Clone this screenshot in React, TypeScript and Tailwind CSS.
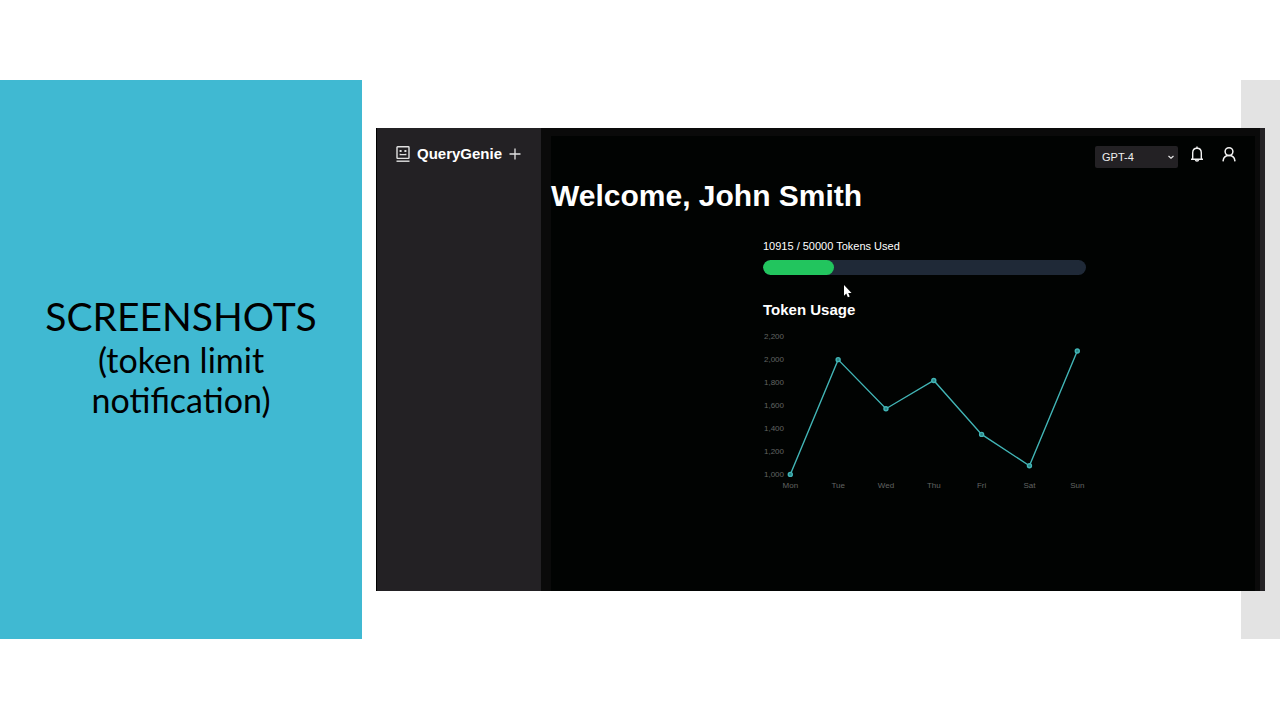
import React from "react";

const usage = [
  { day: "Mon", tokens: 1000 },
  { day: "Tue", tokens: 1998 },
  { day: "Wed", tokens: 1571 },
  { day: "Thu", tokens: 1817 },
  { day: "Fri", tokens: 1348 },
  { day: "Sat", tokens: 1075 },
  { day: "Sun", tokens: 2073 },
];
const ticks = [2200, 2000, 1800, 1600, 1400, 1200, 1000];

const toX = (i: number) => 27.3 + i * 47.83;
const toY = (v: number) => 144.4 - (v - 1000) * 0.115;

function UsageChart() {
  return (
    <svg viewBox="0 0 323 162" className="block w-full" role="img" aria-label="Token usage by day">
      <g fill="#626363" fontSize="8">
        {ticks.map((t) => (
          <text key={t} x="21" y={toY(t) + 3} textAnchor="end">
            {t.toLocaleString("en-US")}
          </text>
        ))}
        {usage.map((p, i) => (
          <text key={p.day} x={toX(i)} y="158" textAnchor="middle">
            {p.day}
          </text>
        ))}
      </g>
      <polyline
        points={usage.map((p, i) => `${toX(i)},${toY(p.tokens)}`).join(" ")}
        fill="none"
        stroke="#42b5b6"
        strokeWidth="1.4"
      />
      {usage.map((p, i) => (
        <circle key={p.day} cx={toX(i)} cy={toY(p.tokens)} r="2" fill="#2a8586" stroke="#42b5b6" strokeWidth="1.4" />
      ))}
    </svg>
  );
}

function RobotIcon() {
  return (
    <svg width="14" height="16" viewBox="0 0 14 16" fill="none" stroke="#e2e2e2" strokeWidth="1.4" aria-hidden="true">
      <rect x="1" y="0.8" width="12" height="11.6" rx="0.6" />
      <path d="M0.500 15.200H13.500" />
      <path d="M3.600 5H5.600M8.400 5H10.400" strokeWidth="1.900" />
      <path d="M4.200 7.700V8.700H9.800V7.700" strokeWidth="1.200" />
    </svg>
  );
}

function PlusIcon() {
  return (
    <svg width="12" height="12" viewBox="0 0 12 12" stroke="#e2e2e2" strokeWidth="1.3" aria-hidden="true">
      <path d="M6 0.500V11.500M0.500 6H11.500" />
    </svg>
  );
}

function BellIcon() {
  return (
    <svg width="14" height="16" viewBox="0 0 14 16" fill="none" stroke="#f2f2f2" strokeWidth="1.4" strokeLinejoin="round" aria-hidden="true">
      <path d="M1 13.200H13M2.700 13.200V6.700C2.700 3.900 4.500 2.200 7 2.200S11.300 3.900 11.300 6.700V13.200" />
      <path d="M7 0.600V2.200" />
      <path d="M5.300 13.400C5.500 14.600 6.200 15.100 7 15.100S8.500 14.600 8.700 13.400" />
    </svg>
  );
}

function PersonIcon() {
  return (
    <svg width="14" height="16" viewBox="0 0 14 16" fill="none" stroke="#f2f2f2" strokeWidth="1.5" strokeLinecap="round" aria-hidden="true">
      <circle cx="7" cy="5.600" r="3.900" />
      <path d="M1.100 14.800C1.500 11.400 4 9.600 7 9.600S12.500 11.400 12.900 14.800" />
    </svg>
  );
}

function Sidebar() {
  return (
    <aside className="w-[165px] shrink-0 border-l border-black bg-[#232124]">
      <div className="flex items-center gap-[7px] pt-4 pl-[19px]">
        <RobotIcon />
        <span className="text-[15px] leading-[19px] font-bold">QueryGenie</span>
        <button type="button" aria-label="New chat">
          <PlusIcon />
        </button>
      </div>
    </aside>
  );
}

function Header() {
  return (
    <header className="flex items-start justify-end pt-2.5 pr-[19px]">
      <div className="relative">
        <select
          aria-label="Model"
          defaultValue="GPT-4"
          className="block h-[22px] w-[83px] appearance-none rounded-xs bg-[#232124] pl-[7px] text-[11px] leading-4 text-[#f0f0f0]"
        >
          <option>GPT-4</option>
        </select>
        <svg
          className="pointer-events-none absolute top-2 right-1"
          width="6"
          height="6"
          viewBox="0 0 6 6"
          fill="none"
          stroke="#e8e8e8"
          strokeWidth="1.2"
          aria-hidden="true"
        >
          <path d="M0.500 2L3 4.300L5.500 2" />
        </svg>
      </div>
      <button type="button" aria-label="Notifications" className="ml-3">
        <BellIcon />
      </button>
      <button type="button" aria-label="Account" className="ml-[18px]">
        <PersonIcon />
      </button>
    </header>
  );
}

export default function App() {
  return (
    <div className="bg-white py-20 font-['Liberation_Sans',Arial,sans-serif]">
      <div className="grid grid-cols-[362px_minmax(0,1fr)_39px]">
        <section className="col-start-1 row-start-1 flex items-center justify-center bg-[#40b9d2] px-10 pb-2 text-center text-black">
          <h1 className="font-['Lato',sans-serif] text-[34px] leading-10">
            <span className="block text-[39px] leading-12">SCREENSHOTS</span>
            (token limit notification)
          </h1>
        </section>
        <div className="col-start-3 row-start-1 bg-[#e3e3e3]" />
        <div className="col-span-2 col-start-2 row-start-1 mt-12 mr-[15px] mb-12 ml-3.5 flex h-[463px] text-white">
          <Sidebar />
          <div className="min-w-0 grow bg-[#0a0a0a] pt-2 pr-[5px] pl-2.5">
            <main className="h-full bg-[#010302]">
              <Header />
              <h2 className="mt-2.5 text-[30px] leading-9 font-bold">Welcome, John Smith</h2>
              <div className="relative mt-6 ml-[212px] w-[323px]">
                <label htmlFor="tokens" className="block text-[11px] leading-4">
                  10915 / 50000 Tokens Used
                </label>
                <progress
                  id="tokens"
                  value={10915}
                  max={50000}
                  className="mt-1.5 block h-[15px] w-full appearance-none overflow-hidden rounded-full bg-[#1f2937] [&::-webkit-progress-bar]:bg-[#1f2937] [&::-webkit-progress-value]:rounded-full [&::-webkit-progress-value]:bg-[#22c55e]"
                />
                <svg className="absolute top-[47px] left-20" width="9" height="13" viewBox="0 0 9 13" fill="#ffffff" aria-hidden="true">
                  <path d="M1 0V10.800L3.300 8.600L4.900 12.200L6.700 11.400L5.200 7.900H8.500Z" />
                </svg>
                <h3 className="mt-[25px] text-[15px] leading-5 font-bold">Token Usage</h3>
                <div className="mt-2.5">
                  <UsageChart />
                </div>
              </div>
            </main>
          </div>
          <div className="w-[5px] shrink-0 bg-[#232124]" />
        </div>
      </div>
    </div>
  );
}
